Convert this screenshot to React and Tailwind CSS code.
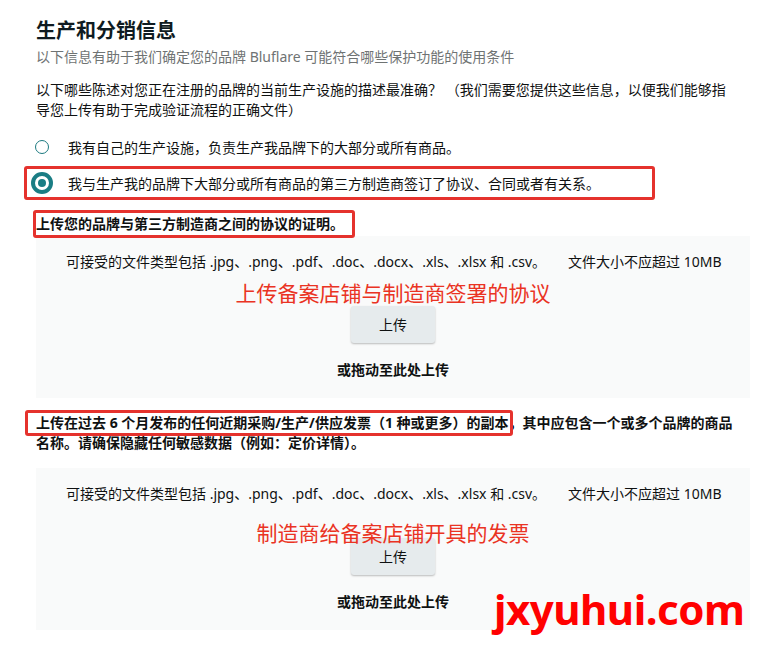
import React from 'react';

const FONT = "font-['Noto_Sans','Noto_Sans_CJK_SC',sans-serif]";

const UploadBox = ({ note, noteTop }) => (
  <div className="relative w-[714px] bg-[#f9fafa] pt-4 pb-[18px] flex flex-col items-center">
    <div className="w-full flex gap-[22px] pl-[30px] text-[14px] leading-5 text-[#0f1111]">
      <span>可接受的文件类型包括 .jpg、.png、.pdf、.doc、.docx、.xls、.xlsx 和 .csv。</span>
      <span>文件大小不应超过 10MB</span>
    </div>
    <button className="mt-[34px] w-[84px] h-[37px] rounded-[3px] bg-[#e6ebed] shadow-[0_1px_2px_rgba(0,0,0,0.25)] text-[14px] text-[#0f1111]">
      上传
    </button>
    <p className="mt-[17px] text-[14px] leading-5 font-bold text-[#0f1111]">或拖动至此处上传</p>
    <p
      className={`absolute left-0 right-0 text-center text-[21px] leading-7 text-[#ea3323] ${noteTop}`}
    >
      {note}
    </p>
  </div>
);

export default function App() {
  return (
    <div className={`relative w-[759px] h-[652px] bg-white pl-9 pt-[17px] ${FONT}`}>
      <h1 className="text-[20px] leading-7 font-bold text-[#0f1b21]">生产和分销信息</h1>
      <p className="mt-[2px] text-[14px] leading-5 text-[#6f7373]">
        以下信息有助于我们确定您的品牌 Bluflare 可能符合哪些保护功能的使用条件
      </p>
      <p className="mt-[13px] w-[714px] text-[14px] leading-5 text-[#0f1111]">
        以下哪些陈述对您正在注册的品牌的当前生产设施的描述最准确？ （我们需要您提供这些信息，以便我们能够指
        <br />
        导您上传有助于完成验证流程的正确文件）
      </p>

      <div className="mt-[17px] flex items-center gap-[19px] h-5 -ml-px">
        <span className="w-[14px] h-[14px] rounded-full border border-[#1c7a80] bg-white" />
        <span className="text-[14px] text-[#0f1111]">我有自己的生产设施，负责生产我品牌下的大部分或所有商品。</span>
      </div>

      <div className="mt-[9px] -ml-3 w-[631px] h-[34px] flex items-center gap-[15px] pl-1 border-[3px] border-[#e5322d] rounded-[3px]">
        <span className="w-[22px] h-[22px] rounded-full border-[4px] border-[#1a7d84] bg-white flex items-center justify-center">
          <span className="w-[8px] h-[8px] rounded-full bg-[#1a7d84]" />
        </span>
        <span className="text-[14px] text-[#0f1111]">我与生产我的品牌下大部分或所有商品的第三方制造商签订了协议、合同或者有关系。</span>
      </div>

      <div className="relative z-10 mt-[10px] -mb-[2px] -ml-[3px] w-fit border-[3px] border-[#e5322d] rounded-[3px] pr-[8px]">
        <p className="text-[14px] leading-[22px] font-bold text-[#0f1111]">上传您的品牌与第三方制造商之间的协议的证明。</p>
      </div>

      <UploadBox note="上传备案店铺与制造商签署的协议" noteTop="top-[43px]" />

      <p className="mt-[15px] w-[720px] text-[14px] leading-5 font-bold text-[#0f1111]">
        <span className="whitespace-nowrap">
          <span className="relative">
            上传在过去 6 个月发布的任何近期采购/生产/供应发票（1 种或更多）的副本
            <span className="absolute -left-[11px] -right-[4px] -top-[3px] -bottom-[4px] border-[3px] border-[#e5322d] rounded-[3px]" />
          </span>
          ，其中应包含一个或多个品牌的商品
        </span>
        <br />
        名称。请确保隐藏任何敏感数据（例如：定价详情）。
      </p>

      <div className="mt-[15px]">
        <UploadBox note="制造商给备案店铺开具的发票" noteTop="top-[51px]" />
      </div>

      <span className="absolute left-[494px] top-[588px] text-[42px] leading-none font-bold text-[#ff0000] font-['Noto_Sans',sans-serif] tracking-[-0.5px]">
        jxyuhui.com
      </span>
    </div>
  );
}
